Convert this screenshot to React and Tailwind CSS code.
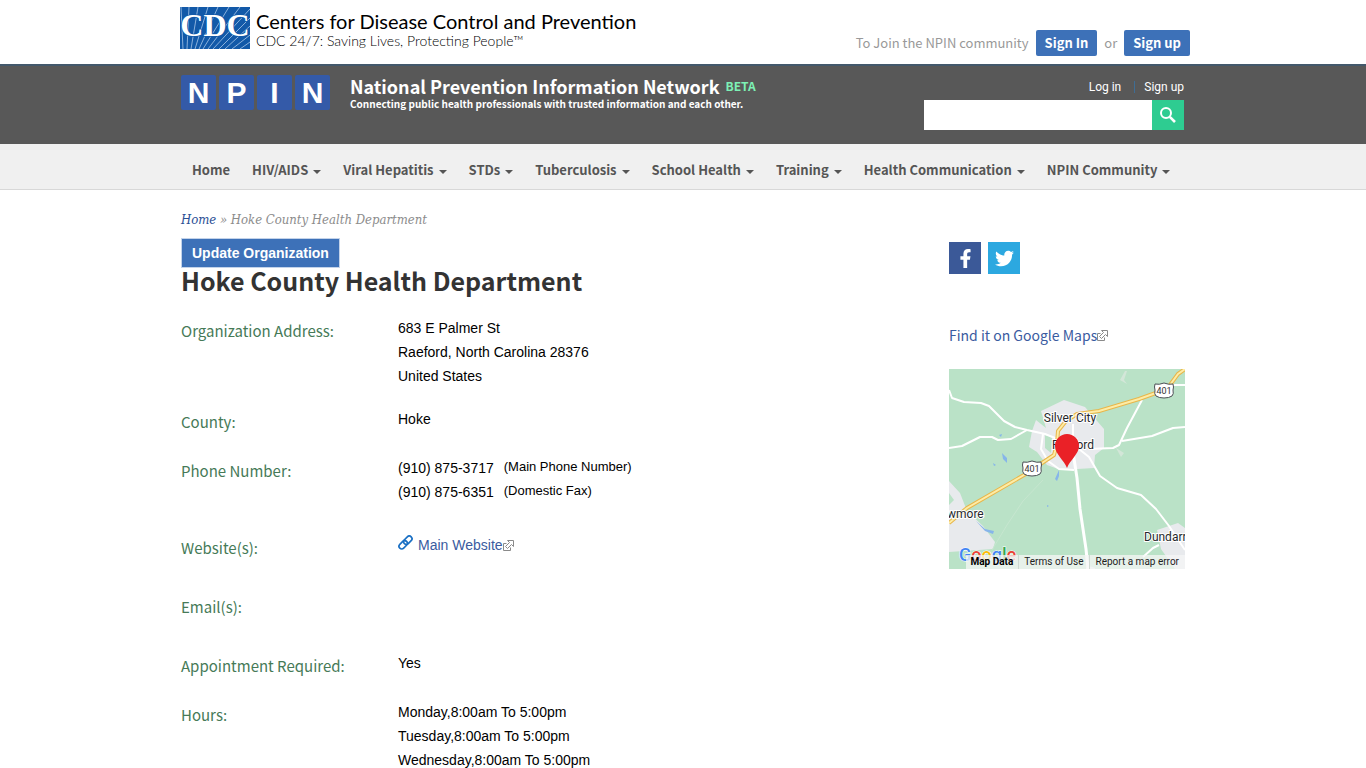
import React, { useState } from 'react';
import { FaFacebookF, FaTwitter } from 'react-icons/fa';

const navItems = [
  { label: 'Home', menu: false },
  { label: 'HIV/AIDS', menu: true },
  { label: 'Viral Hepatitis', menu: true },
  { label: 'STDs', menu: true },
  { label: 'Tuberculosis', menu: true },
  { label: 'School Health', menu: true },
  { label: 'Training', menu: true },
  { label: 'Health Communication', menu: true },
  { label: 'NPIN Community', menu: true },
];

const phones = [
  { number: '(910) 875-3717', type: '(Main Phone Number)' },
  { number: '(910) 875-6351', type: '(Domestic Fax)' },
];

const hours = [
  'Monday,8:00am To 5:00pm',
  'Tuesday,8:00am To 5:00pm',
  'Wednesday,8:00am To 5:00pm',
];

const CdcLogo = () => (
  <svg width="71" height="42" viewBox="0 0 71 42" role="img" aria-label="CDC">
    <rect width="70" height="42" fill="#1259a8" />
    <g stroke="#a9c8ea" strokeWidth="0.8" fill="none">
      <path d="M3 42L1 0M7 42L9 0M11 42L18 0M15 42L28 0M19 42L38 0M23 42L49 0M28 42L60 0M33 42L70 2M39 42L70 11M45 42L70 19M52 42L70 28M60 42L70 35" />
    </g>
    <text
      x="35"
      y="29"
      textAnchor="middle"
      fontSize="32"
      fontWeight="700"
      fill="#fff"
      stroke="#1259a8"
      strokeWidth="1.5"
      paintOrder="stroke"
      className="font-['Liberation_Serif',serif]"
    >
      CDC
    </text>
  </svg>
);

const SearchIcon = () => (
  <svg width="18" height="18" viewBox="0 0 18 18" fill="none" stroke="#fff" aria-hidden="true">
    <circle cx="7" cy="7" r="5" strokeWidth="2" />
    <path d="M10.8 10.8L16 16" strokeWidth="2.6" />
  </svg>
);

const ChainIcon = () => (
  <svg className="mr-[5px] mb-[6px]" width="15" height="15" viewBox="0 0 15 15" fill="none" stroke="#1a70c4" strokeWidth="1.7" aria-hidden="true">
    <g transform="rotate(-45 7.5 7.5)">
      <rect x="-0.5" y="4.8" width="9.5" height="5.4" rx="2.7" />
      <rect x="6" y="4.8" width="9.5" height="5.4" rx="2.7" />
    </g>
  </svg>
);

const ExternalIcon = () => (
  <svg className="inline-block" width="11" height="11" viewBox="0 0 11 11" fill="#fff" stroke="#8a8a8a" aria-hidden="true">
    <path d="M3.5 3.5H.5v7h7v-3" />
    <path d="M4.5.5h6v6l-2-2-4 4-2-2 4-4z" />
  </svg>
);

const Shield = ({ x, y }) => (
  <g>
    <path
      d={`M${x - 9} ${y - 6}q4 1 9-1q5 2 9 1q1 3 0 6q1 4-1 6q-3 2-8 2q-5 0-8-2q-2-2-1-6q-1-3 0-6z`}
      fill="#fff"
      stroke="#4b4f55"
    />
    <text x={x} y={y + 4} textAnchor="middle" fontSize="9" fill="#333">401</text>
  </g>
);

const LocationMap = () => (
  <div className="relative h-[200px] w-[236px] overflow-hidden">
    <svg width="236" height="200" viewBox="0 0 236 200" className="font-[Roboto,sans-serif]" role="img" aria-label="Raeford">
      <rect width="236" height="200" fill="#bae2c7" />
      <g fill="#e8eaed">
        <path d="M92 42L115 31L136 38L155 60V79L146 86L145 99L112 101L98 96L88 83L80 78L83 62L87 51L97 59z" />
        <path d="M0 112L11 124L18 142L34 157L46 173L44 180L0 183z" />
        <path d="M208 161L229 154L236 159V200H226L212 180z" />
        <path d="M137 199q3-3 9 0v1h-9z" />
        <path d="M171 11l5-9h2l-3 9 3 4z" fill="#d3e6d8" />
        <path d="M167 79l8 5-3 4z" fill="#d3e6d8" />
      </g>
      <path d="M0 124l5 7-5 5z" fill="#bae2c7" />
      <path d="M96 66l7 2-1 16-6-5z" fill="#bae2c7" />
      <g fill="#86b5ea">
        <path d="M53 84l5 5v5l-4-4zM44 94l3 2-2 1zM106 110l4-9v6l-2 5zM27 152l9 8 9 2-1 3-8-3zM50 66l3-1-1 3zM98 136l2 1-2 1z" />
      </g>
      <path d="M94 111L74 132L58 156L43 181" fill="none" stroke="#c6e6cf" />
      <g fill="none" stroke="#fff" strokeLinejoin="round">
        <path strokeWidth="2" d="M0 21L3 29L15 33L32 34L40 37L55 52L66 58L78 61L96 65L106 69L130 80L140 88L151 107L168 119L192 126L207 140L220 157L236 181" />
        <path strokeWidth="2" d="M0 79L13 77L31 68L43 68L49 71L62 70L78 61" />
        <path strokeWidth="2" d="M94 65L92 80L99 92L110 100L125 101" />
        <path strokeWidth="3" d="M124 83L128 109L131 140L137 180L139 200" />
        <path strokeWidth="2" d="M124 55L124 83M140 80L164 79L170 76L178 59L193 31M173 72L203 67L224 59L236 58" />
        <path strokeWidth="2" d="M222 16L236 16M194 188L204 179L210 176" />
      </g>
      <g fill="none" strokeLinejoin="round">
        <path stroke="#e8b64a" strokeWidth="4" d="M0 154L18 139L75 106L105 86L108 75L109 62L117 52L128 45L150 42L190 30L218 20L229 5L236 0" />
        <path stroke="#fdeca6" strokeWidth="2" d="M0 154L18 139L75 106L105 86L108 75L109 62L117 52L128 45L150 42L190 30L218 20L229 5L236 0" />
      </g>
      <Shield x={215} y={21} />
      <Shield x={83} y={99} />
      <g fill="#26282b" stroke="#fff" strokeWidth="2" paintOrder="stroke" fontSize="12">
        <text x="121" y="53" textAnchor="middle">Silver City</text>
        <text x="124" y="80" textAnchor="middle">Raeford</text>
        <text x="-2" y="149">wmore</text>
        <text x="195" y="172">Dundarrach</text>
      </g>
      <path d="M118 99C115 91 106 85 106 77a12 12 0 0 1 24 0C130 85 121 91 118 99z" fill="#ea2127" />
      <g fontSize="18" fontWeight="500" stroke="#fff" strokeWidth="1" paintOrder="stroke">
        <text x="10" y="192">
          <tspan fill="#4285f4">G</tspan>
          <tspan fill="#ea4335">o</tspan>
          <tspan fill="#fbbc05">o</tspan>
          <tspan fill="#4285f4">g</tspan>
          <tspan fill="#34a853">l</tspan>
          <tspan fill="#ea4335">e</tspan>
        </text>
      </g>
    </svg>
    <div className="absolute right-0 bottom-0 flex h-[14px] items-center divide-x divide-[#cfd8d2] bg-[#f5f5f5]/75 font-[Roboto,sans-serif] text-[10px] leading-[14px] text-[#222]">
      <button type="button" className="px-[5px] font-bold text-black">Map Data</button>
      <a href="#terms" className="px-[5px]">Terms of Use</a>
      <a href="#report" className="px-[6px]">Report a map error</a>
    </div>
  </div>
);

const Row = ({ label, wide, children }) => (
  <div className={wide ? 'mb-[29px] flex' : 'mb-[19px] flex'}>
    <dt className="w-[217px] shrink-0 font-['Noto_Sans_CJK_SC',sans-serif] text-[15px] leading-[30px] text-[#467a57]">{label}</dt>
    <dd className="text-sm leading-6 text-black">{children}</dd>
  </div>
);

const App = () => {
  const [query, setQuery] = useState('');

  return (
    <div className="min-h-screen overflow-x-hidden bg-white font-['Liberation_Sans',sans-serif]">
      <div className="mx-auto flex h-16 max-w-[1020px] justify-between pr-[3px] pl-[7px]">
        <a href="#cdc" className="flex gap-[5px] pt-[7px] text-black">
          <CdcLogo />
          <span className="font-[Lato,sans-serif]">
            <span className="block text-[20px] leading-7">Centers for Disease Control and Prevention</span>
            <span className="block text-[14px] leading-3 font-light">CDC 24/7: Saving Lives, Protecting People™</span>
          </span>
        </a>
        <div className="flex items-start gap-[7px] pt-[30px] font-['Noto_Sans_CJK_SC',sans-serif] text-[13px] leading-[26px] text-[#999]">
          <span>To Join the NPIN community</span>
          <a href="#signin" className="rounded-xs bg-[#3d71b8] px-[9px] font-bold text-white">Sign In</a>
          <span>or</span>
          <a href="#signup" className="rounded-xs bg-[#3d71b8] px-[9px] font-bold text-white">Sign up</a>
        </div>
      </div>

      <header className="border-t-2 border-[#43586b] bg-[#585858]">
        <div className="mx-auto flex h-[78px] max-w-[1004px] justify-between text-white">
          <div className="flex pt-[9px]">
            <a href="#npin" className="mr-5 flex gap-[3px] text-[30px] leading-[35px] font-bold" aria-label="NPIN">
              {['N', 'P', 'I', 'N'].map((letter, i) => (
                <span key={i} className="h-[35px] w-[35px] rounded-xs bg-[#345aa8] text-center">{letter}</span>
              ))}
            </a>
            <div className="font-['Noto_Sans_CJK_SC',sans-serif] font-bold">
              <div className="flex items-center gap-[6px] text-[18px] leading-[22px]">
                National Prevention Information Network
                <span className="text-[12px] text-[#7df0b5]">BETA</span>
              </div>
              <p className="text-[10px] leading-[14px]">Connecting public health professionals with trusted information and each other.</p>
            </div>
          </div>
          <div className="pt-[13px] pr-px">
            <div className="flex justify-end font-[Roboto,sans-serif] text-xs leading-4">
              <a href="#login" className="pr-[13px]">Log in</a>
              <span className="my-[2px] border-l border-[#3f6d94] pr-[9px]" />
              <a href="#signup">Sign up</a>
            </div>
            <form className="mt-[5px] flex" onSubmit={(e) => e.preventDefault()}>
              <input
                type="text"
                aria-label="Search"
                value={query}
                onChange={(e) => setQuery(e.target.value)}
                className="h-[30px] w-[228px] bg-white px-2 text-sm text-black outline-none"
              />
              <button type="submit" aria-label="Search" className="flex h-[30px] w-8 items-center justify-center bg-[#2ecc91]">
                <SearchIcon />
              </button>
            </form>
          </div>
        </div>
      </header>

      <nav className="border-b border-[#d8d8d8] bg-[#f0f0f0]">
        <ul className="mx-auto flex h-[45px] max-w-[1004px] items-center gap-[22px] px-[11px] pt-[7px] font-['Noto_Sans_CJK_SC',sans-serif] text-[13px] leading-5 font-bold text-[#555]">
          {navItems.map((item) => (
            <li key={item.label}>
              <a href="#menu" className="flex items-center gap-[5px] whitespace-nowrap">
                {item.label}
                {item.menu && <span className="mt-1 border-x-4 border-t-4 border-x-transparent border-t-[#555]" />}
              </a>
            </li>
          ))}
        </ul>
      </nav>

      <main className="mx-auto flex max-w-[1004px] justify-between">
        <div>
          <div className="pt-5 font-['DejaVu_Serif_Condensed','DejaVu_Serif',serif] text-[13px] leading-5 text-[#8c8c8c] italic">
            <a href="#home" className="text-[#2b4f95]">Home</a> » Hoke County Health Department
          </div>
          <button type="button" className="mt-2 block border border-[#c3d3ea] bg-[#3d71b8] px-[10px] text-sm leading-7 font-bold text-white">
            Update Organization
          </button>
          <h1 className="font-['Noto_Sans_CJK_SC',sans-serif] text-[25px] leading-6 font-bold text-[#333]">
            Hoke County Health Department
          </h1>
          <dl className="mt-6">
            <Row label="Organization Address:">
              683 E Palmer St<br />
              Raeford, North Carolina 28376<br />
              United States
            </Row>
            <Row label="County:">Hoke</Row>
            <Row label="Phone Number:" wide>
              {phones.map((phone) => (
                <div key={phone.number} className="flex gap-[10px]">
                  <span>{phone.number}</span>
                  <span className="text-[13px] leading-[22px]">{phone.type}</span>
                </div>
              ))}
            </Row>
            <Row label="Website(s):" wide>
              <a href="#website" className="flex items-center text-[#3a5ba0]">
                <ChainIcon />
                Main Website
                <ExternalIcon />
              </a>
            </Row>
            <Row label="Email(s):" wide />
            <Row label="Appointment Required:">Yes</Row>
            <Row label="Hours:">
              {hours.map((line) => (
                <div key={line}>{line}</div>
              ))}
            </Row>
          </dl>
        </div>

        <aside className="w-[236px] pt-[52px]">
          <div className="flex gap-[7px] text-white">
            <a href="#facebook" aria-label="Facebook" className="flex size-8 items-center justify-center bg-[#3b5998]">
              <FaFacebookF size={19} />
            </a>
            <a href="#twitter" aria-label="Twitter" className="flex size-8 items-center justify-center bg-[#2ca8e0]">
              <FaTwitter size={19} />
            </a>
          </div>
          <a href="#map" className="mt-[49px] mb-[22px] flex items-center font-['Noto_Sans_CJK_SC',sans-serif] text-[14px] leading-6 text-[#3a5ba0]">
            Find it on Google Maps
            <ExternalIcon />
          </a>
          <LocationMap />
        </aside>
      </main>
    </div>
  );
};

export default App;
